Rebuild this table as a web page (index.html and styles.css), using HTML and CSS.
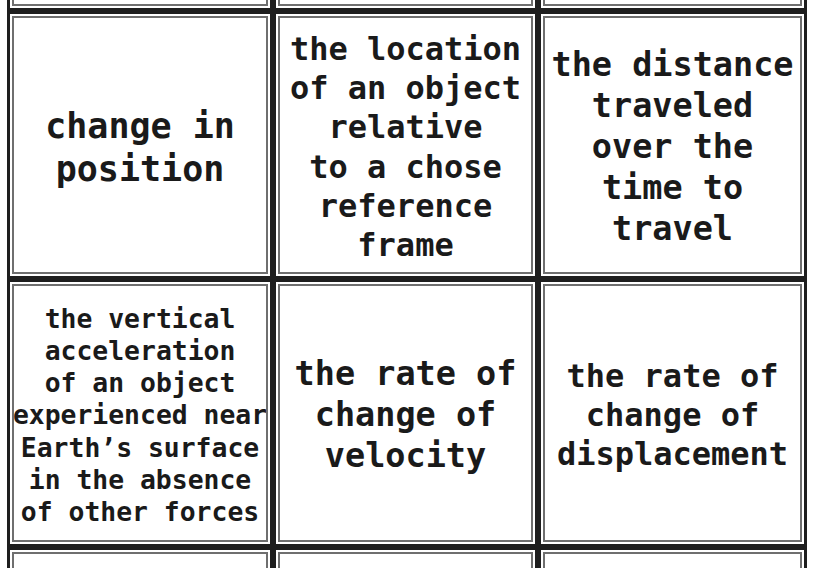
FILE: index.html
```html
<!DOCTYPE html>
<html lang="en">
<head>
<meta charset="utf-8">
<title>Flashcards</title>
<link rel="stylesheet" href="styles.css">
</head>
<body>
<div class="sheet">
  <div class="card"><div class="face"></div></div>
  <div class="card"><div class="face"></div></div>
  <div class="card"><div class="face"></div></div>

  <div class="card"><div class="face size-35"><p>change in<br>position</p></div></div>
  <div class="card"><div class="face size-32"><p>the location<br>of an object<br>relative<br>to a chose<br>reference<br>frame</p></div></div>
  <div class="card"><div class="face size-33"><p>the distance<br>traveled<br>over the<br>time to<br>travel</p></div></div>

  <div class="card"><div class="face size-26"><p>the vertical<br>acceleration<br>of an object<br>experienced near<br>Earth’s surface<br>in the absence<br>of other forces</p></div></div>
  <div class="card"><div class="face size-33"><p>the rate of<br>change of<br>velocity</p></div></div>
  <div class="card"><div class="face size-32"><p>the rate of<br>change of<br>displacement</p></div></div>

  <div class="card"><div class="face"></div></div>
  <div class="card"><div class="face"></div></div>
  <div class="card"><div class="face"></div></div>
</div>
</body>
</html>
```

FILE: styles.css
```css
html, body {
  margin: 0;
  padding: 0;
  background: #ffffff;
  overflow: hidden;
}

.sheet {
  margin: -257px 0 0 7px;
  width: 800px;
  display: grid;
  grid-template-columns: 266px 265px 269px;
  grid-auto-rows: 268px;
}

.card {
  box-sizing: border-box;
  border: 3px solid #1e1e1e;
  padding: 2px;
  background: #fff;
}

.face {
  box-sizing: border-box;
  height: 100%;
  padding-top: 5px;
  border: 2px solid #6f6f6f;
  display: flex;
  align-items: center;
  justify-content: center;
  text-align: center;
  font-family: "DejaVu Sans Mono", "Liberation Mono", monospace;
  font-weight: bold;
  color: #1a1a1a;
  line-height: 1.22;
  white-space: nowrap;
  overflow: hidden;
}

.face p {
  margin: 0;
}

.size-35 { font-size: 35px; }
.size-33 { font-size: 33.5px; }
.size-32 { font-size: 32px; }
.size-26 { font-size: 26.4px; }
```
